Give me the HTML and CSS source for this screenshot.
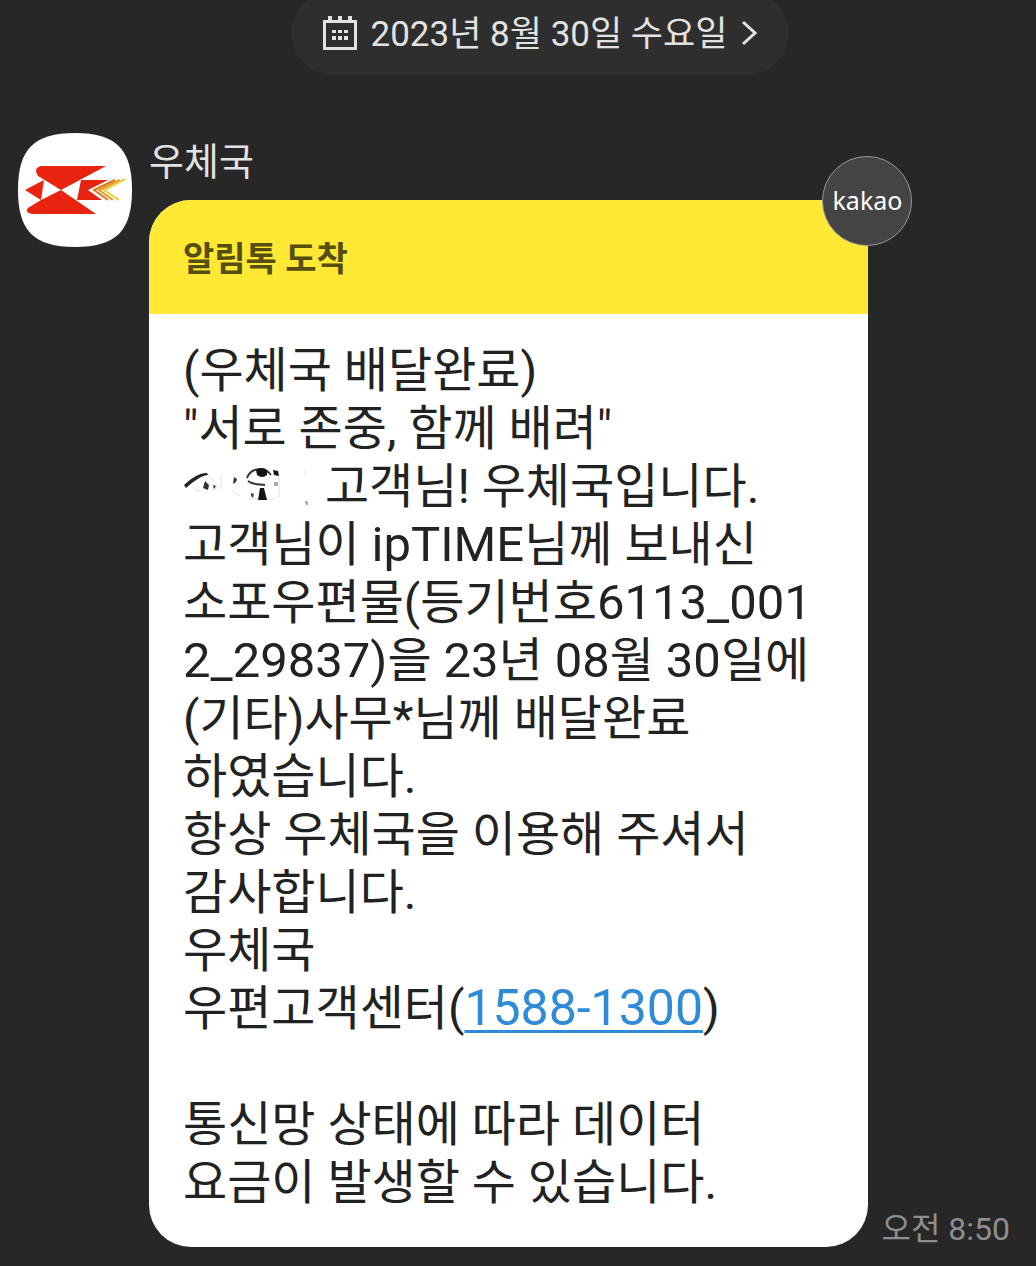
FILE: index.html
```html
<!DOCTYPE html>
<html lang="ko">
<head>
    <meta charset="UTF-8">
    <meta name="viewport" content="width=device-width, initial-scale=1.0">
    <link rel="stylesheet" href="styles.css">
    <title>우체국</title>
</head>
<body>
    <header class="date-bar">
        <button class="date-pill" type="button">
            <svg class="calendar" viewBox="0 0 34 34" aria-hidden="true">
                <path d="M1.5 5.5h31v27h-31z" fill="none" stroke="#e2e2e2" stroke-width="3"/>
                <path d="M5 0h4v5H5zM15 0h4v5h-4zM25 0h4v5h-4z" fill="#e2e2e2"/>
                <path d="M9 14h4v3H9zM15 14h4v3h-4zM21 14h4v3h-4zM9 20h4v4H9zM15 20h4v4h-4zM21 20h4v4h-4z" fill="#e2e2e2"/>
            </svg>
            <span class="date">2023년 8월 30일 수요일</span>
            <svg class="arrow" viewBox="0 0 16 26" aria-hidden="true">
                <path d="M2 2l12 11L2 24" fill="none" stroke="#e2e2e2" stroke-width="3"/>
            </svg>
        </button>
    </header>

    <main class="chat">
        <svg class="avatar" viewBox="0 0 114 114" role="img" aria-label="우체국">
            <path d="M57 0C98 0 114 16 114 57S98 114 57 114 0 98 0 57 16 0 57 0z" fill="#fff"/>
            <g fill="#e8230f">
                <path d="M23 33H88L43 57 20 43Q15 35 23 33z"/>
                <path d="M43 57L78 81H14Q6 79 10 75L23 67z"/>
                <path d="M7 57L26 47 23 67z"/>
                <path d="M63 47H90L70 57 84 67H59z"/>
            </g>
            <g fill="none" stroke-width="2">
                <path d="M97 47L76 57l14 10" stroke="#e2761c"/>
                <path d="M102 47L81 57l14 10" stroke="#dd9a22"/>
                <path d="M107 46L86 57l15 10" stroke="#f2cb3a"/>
            </g>
        </svg>

        <div class="content">
            <div class="sender">우체국</div>
            <div class="message">
                <article class="bubble">
                    <h1 class="bubble-title">알림톡 도착</h1>
                    <div class="badge">kakao</div>
                    <p class="text">
                        (우체국 배달완료)<br>
                        "서로 존중, 함께 배려"<br>
                        <svg class="erased" viewBox="0 0 130 40" aria-hidden="true">
                            <path d="M1 18C8 12 15 6 24 6l1 2C17 9 10 15 3 21z" fill="#222"/>
                            <path d="M25 8c4 2 6 8 10 9M10 20c2 3 5 4 9 4M28 24l8-5M38 8v14M50 22c0 6 4 5 7 7M66 32h27M96 8v22" fill="none" stroke="#dde4e4"/>
                            <path d="M22 14l4 4-1 5-5-2zM30 18l3 1-2 3zM51 10l3 2-1 3-3 2z" fill="#2b3434"/>
                            <path d="M64 11C67 2 80-2 88 8M65 14c5 4 10 3 17 4" fill="none" stroke="#333" stroke-width="2"/>
                            <path d="M73 3q6-4 11 0v5q-5 4-10 0zM90 3l5 1 1 5-5-1zM77 21h4l3 12h-9z" fill="#141414"/>
                            <path d="M68 26l3 1-1 4-2-2z" fill="#444"/>
                            <path d="M91 15h4v4h-4z" fill="#aaa"/>
                            <path d="M122 2v8" stroke="#eee"/>
                            <path d="M122 35h2v3" fill="none" stroke="#555"/>
                        </svg>
                        고객님! 우체국입니다.<br>
                        고객님이 <span class="latin">ipTIME</span>님께 보내신<br>
                        소포우편물(등기번호<span class="latin">6113_001</span><br>
                        <span class="latin">2_29837)</span>을 <span class="latin">23</span>년 <span class="latin">08</span>월 <span class="latin">30</span>일에<br>
                        (기타)사무*님께 배달완료<br>
                        하였습니다.<br>
                        항상 우체국을 이용해 주셔서<br>
                        감사합니다.<br>
                        우체국<br>
                        우편고객센터(<a class="phone" href="tel:1588-1300">1588-1300</a>)
                    </p>
                    <p class="text">
                        통신망 상태에 따라 데이터<br>
                        요금이 발생할 수 있습니다.
                    </p>
                </article>
                <time class="time" datetime="08:50">오전 8:50</time>
            </div>
        </div>
    </main>
</body>
</html>
```
FILE: styles.css
```css
body {
    margin: 0;
    background-color: #272727;
    color: #e2e2e2;
    font-family: Roboto, "Noto Sans CJK KR", sans-serif;
}

.date-bar {
    display: flex;
    justify-content: center;
    padding-left: 44px;
    margin-top: -9px;
}

.date-pill {
    display: flex;
    align-items: center;
    gap: 14px;
    height: 84px;
    padding: 0 32px;
    border: 0;
    border-radius: 42px;
    background-color: #2e2e2e;
    color: #e2e2e2;
    font-family: inherit;
    font-size: 35px;
    white-space: nowrap;
    cursor: pointer;
}

.date {
    padding-bottom: 6px;
}

.calendar {
    width: 34px;
    height: 34px;
}

.arrow {
    width: 16px;
    height: 26px;
}

.chat {
    display: flex;
    align-items: flex-start;
    gap: 17px;
    padding: 58px 26px 19px 18px;
}

.avatar {
    flex: none;
    width: 114px;
    height: 114px;
}

.content {
    flex: 1;
    min-width: 0;
}

.sender {
    height: 67px;
    line-height: 58px;
    font-size: 38px;
}

.message {
    display: flex;
    align-items: flex-end;
    gap: 13px;
}

.bubble {
    position: relative;
    flex: 1;
    padding-bottom: 35px;
    border-radius: 42px;
    background-color: #fff;
    color: #222;
}

.bubble-title {
    margin: 0 0 28px;
    padding: 4px 34px 0;
    border-radius: 42px 42px 0 0;
    background-color: #ffe935;
    color: #554e0c;
    font-size: 34px;
    line-height: 110px;
}

.badge {
    position: absolute;
    top: -44px;
    right: -44px;
    box-sizing: border-box;
    width: 90px;
    height: 90px;
    border: 1px solid #999;
    border-radius: 50%;
    background-color: #444;
    color: #fff;
    font-family: "Noto Sans", sans-serif;
    font-size: 25px;
    line-height: 86px;
    text-align: center;
}

.text {
    margin: 0 34px;
    font-size: 48px;
    line-height: 58px;
    white-space: nowrap;
}

.text + .text {
    margin-top: 58px;
}

.latin {
    font-size: 49px;
    line-height: 1;
}

.phone {
    color: #2f8bd8;
    font-size: 50px;
    line-height: 1;
    text-decoration-thickness: 3px;
    text-underline-offset: 5px;
}

.erased {
    width: 130px;
    height: 40px;
    vertical-align: -4px;
}

.time {
    color: #8e8e8e;
    font-size: 32px;
    line-height: 36px;
    white-space: nowrap;
}
```
